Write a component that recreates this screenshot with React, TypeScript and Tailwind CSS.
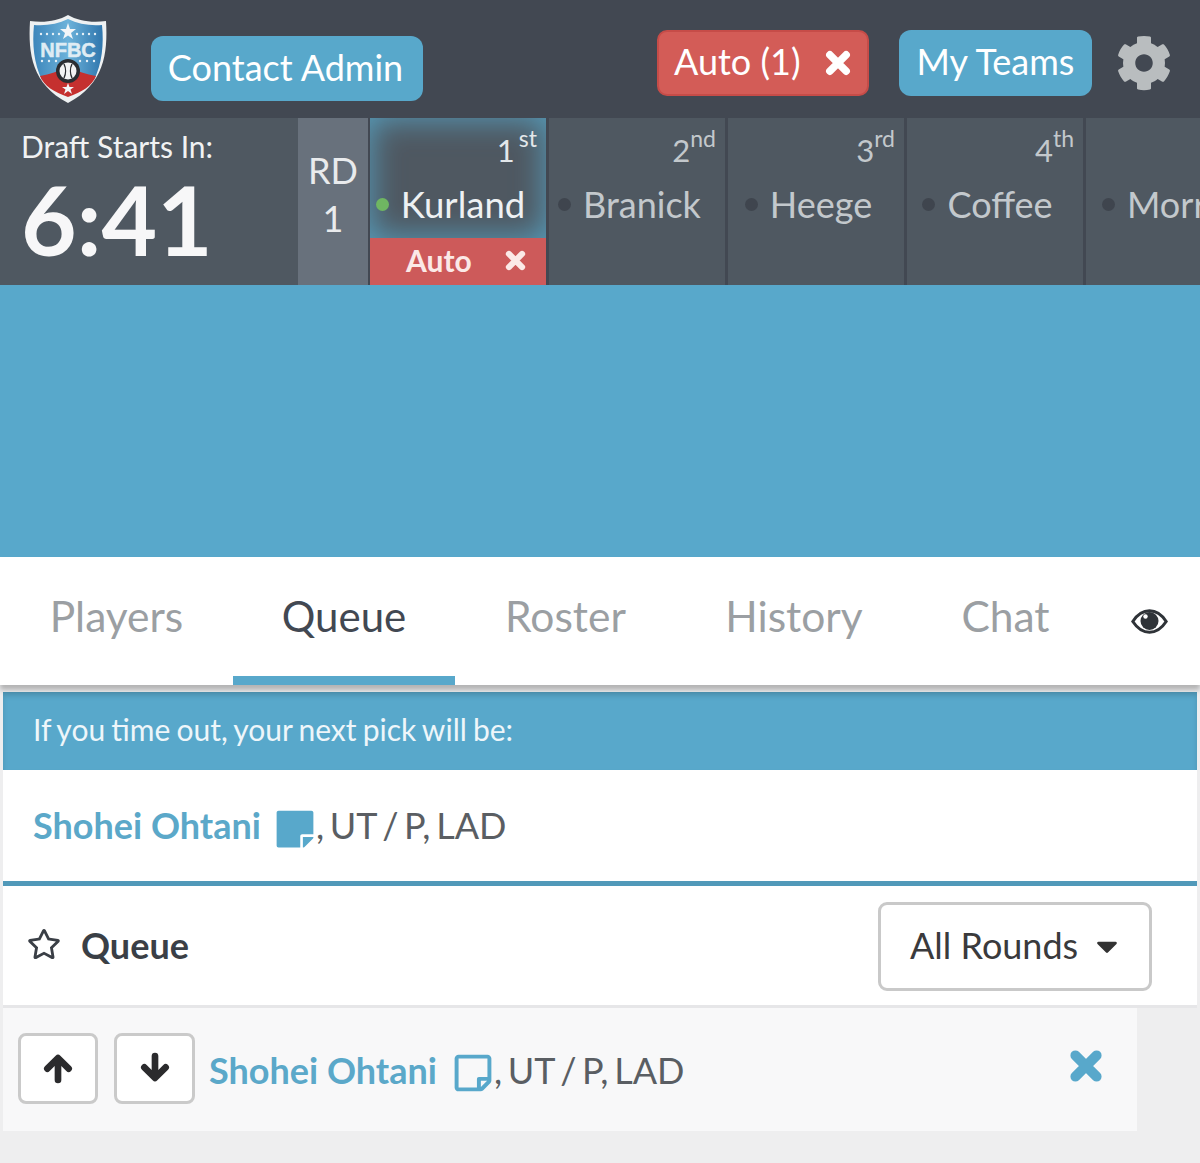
import { FaCaretDown, FaCog, FaRegStar, FaRegStickyNote, FaStickyNote } from "react-icons/fa";

const picks = [
  { num: "2", suffix: "nd", name: "Branick" },
  { num: "3", suffix: "rd", name: "Heege" },
  { num: "4", suffix: "th", name: "Coffee" },
];

const tabs = [
  { label: "Players", width: "w-[233px]" },
  { label: "Queue", width: "w-[222px]", active: true },
  { label: "Roster", width: "w-[221px]" },
  { label: "History", width: "w-[236px]" },
  { label: "Chat", width: "w-[187px]" },
];

const dotsTop = [13, 19, 25, 31, 49, 55, 61, 67];
const dotsLow = [14, 21, 28, 52, 59, 66];

function CloseIcon({ className }: { className: string }) {
  return (
    <svg viewBox="0 0 24 24" className={className} fill="none" stroke="currentColor" strokeWidth="7" strokeLinecap="round">
      <path d="M4.5 4.5 L19.5 19.5 M19.5 4.5 L4.5 19.5" />
    </svg>
  );
}

function ArrowIcon({ up }: { up?: boolean }) {
  return (
    <svg viewBox="0 0 24 24" className="w-[32px] h-[32px] text-[#2b2b2d]" fill="none" stroke="currentColor" strokeWidth="5" strokeLinecap="round" strokeLinejoin="round">
      <path d={up ? "M12 21 L12 5 M4 12.5 L12 4.5 L20 12.5" : "M12 3 L12 19 M4 11.5 L12 19.5 L20 11.5"} />
    </svg>
  );
}

function EyeIcon() {
  return (
    <svg width="37" height="25" viewBox="0 0 37 25" className="shrink-0">
      <path d="M1.8 12.5 C7 4.5 12.5 1.8 18.5 1.8 C24.5 1.8 30 4.5 35.2 12.5 C30 20.5 24.5 23.2 18.5 23.2 C12.5 23.2 7 20.5 1.8 12.5 Z" fill="none" stroke="#2f3338" strokeWidth="3" />
      <circle cx="18.5" cy="12" r="9" fill="#2f3338" />
      <circle cx="14.5" cy="7.5" r="2.2" fill="#ffffff" />
    </svg>
  );
}

function Logo() {
  return (
    <svg width="80" height="90" viewBox="0 0 80 90" className="shrink-0">
      <defs>
        <linearGradient id="shield" x1="0" y1="0" x2="1" y2="0">
          <stop offset="0" stopColor="#3d86bb" />
          <stop offset="0.5" stopColor="#6cb2da" />
          <stop offset="1" stopColor="#2f76ad" />
        </linearGradient>
      </defs>
      <path d="M40 1 C50 7 64 9 78 7 C80 40 76 70 40 89 C4 70 0 40 2 7 C16 9 30 7 40 1 Z" fill="#eef1f2" />
      <path d="M40 5 C50 10 62 12 74 11 C76 30 74 50 66 66 L14 66 C6 50 4 30 6 11 C18 12 30 10 40 5 Z" fill="url(#shield)" />
      <path d="M12 62 C22 60 30 58 40 52 C50 58 58 60 68 62 C64 72 54 78 40 83 C26 78 16 72 12 62 Z" fill="#c5302f" />
      <polygon points="40,9 42,15 48,15 43,19 45,25 40,21.5 35,25 37,19 32,15 38,15" fill="#f3f6f8" />
      {dotsTop.map((x) => (
        <circle key={x} cx={x} cy="20" r="1.2" fill="#e8f1f7" />
      ))}
      {dotsLow.map((x) => (
        <circle key={x} cx={x} cy="47" r="1.2" fill="#e8f1f7" />
      ))}
      <text x="40" y="43" textAnchor="middle" fontFamily="Liberation Sans, sans-serif" fontWeight="700" fontSize="20" fill="#dfecf4" stroke="#dfecf4" strokeWidth="0.5">
        NFBC
      </text>
      <circle cx="40" cy="57" r="12" fill="#2b2d31" />
      <circle cx="40" cy="57" r="8.5" fill="#f3f3f3" />
      <path d="M36 50 C38 54 38 60 36 64 M44 50 C42 54 42 60 44 64" stroke="#2b2d31" strokeWidth="1.4" fill="none" />
      <polygon points="40,69 41.5,73 46,73 42.5,75.5 44,80 40,77 36,80 37.5,75.5 34,73 38.5,73" fill="#f3f6f8" />
    </svg>
  );
}

function PickCell({ num, suffix, name }: { num?: string; suffix?: string; name: string }) {
  return (
    <div className="w-[176px] shrink-0 bg-[#4f5861] pr-[9px]">
      <div className="h-[31px] mt-[9px] text-right text-[31px] leading-[31px] text-[#c3c8cc]">
        {num}
        <sup className="text-[23px] leading-none align-[15px] top-0">{suffix}</sup>
      </div>
      <div className={`flex items-center gap-[12px] mt-[24px] text-[36px] leading-[44px] text-[#c3c8cc] whitespace-nowrap ${num ? "justify-center pr-[6px]" : "pl-[16px]"}`}>
        <span className="w-[13px] h-[13px] rounded-full bg-[#3f454e] shrink-0" />
        {name}
      </div>
    </div>
  );
}

export default function App() {
  return (
    <div className="w-[1200px] h-[1163px] overflow-hidden bg-[#eeeeef] font-['Lato',sans-serif] flex flex-col">
      <header className="h-[118px] shrink-0 bg-[#424852] flex items-center pl-[28px] pr-[28px]">
        <Logo />
        <button className="ml-[43px] mt-[18px] h-[65px] w-[272px] pb-[2px] pr-[3px] rounded-[12px] bg-[#58a8cb] text-white text-[36px] leading-none">
          Contact Admin
        </button>
        <button className="ml-auto mt-[8px] h-[66px] w-[212px] rounded-[10px] bg-[#d35c57] border-2 border-[#c64c48] text-white text-[36px] leading-none flex items-center pl-[15px]">
          <span className="mb-[4px]">Auto (1)</span>
          <CloseIcon className="ml-[24px] w-[26px] h-[26px]" />
        </button>
        <button className="ml-[30px] mt-[8px] h-[66px] w-[193px] pb-[4px] rounded-[12px] bg-[#58a8cb] text-white text-[36px] leading-none">
          My Teams
        </button>
        <FaCog className="ml-[24px] mt-[8px] text-[56px] text-[#b9bdbf]" />
      </header>

      <section className="h-[167px] shrink-0 bg-[#424852] flex gap-[3px] overflow-hidden">
        <div className="w-[298px] shrink-0 bg-[#4f5861] pl-[21px] text-white -mr-[3px]">
          <div className="text-[30px] leading-[31px] pt-[13px] box-content text-[#f1f2f3]">Draft Starts In:</div>
          <div className="text-[96px] leading-[80px] font-bold mt-[17px] text-[#f7f7f8]">6:41</div>
        </div>
        <div className="w-[70px] shrink-0 bg-[#68717c] text-center text-[#e9ebed] text-[36px] leading-[48px] pt-[28px] -mr-px">
          RD
          <br />1
        </div>
        <div className="w-[176px] shrink-0 flex flex-col bg-[#4f5861]">
          <div className="flex-1 pr-[9px] shadow-[inset_0_0_32px_rgba(88,168,203,0.9)]">
            <div className="h-[31px] pt-0 mt-[9px] text-right text-[31px] leading-[31px] text-[#e3e7ea]">
              1
              <sup className="ml-[4px] text-[23px] leading-none align-[15px] top-0">st</sup>
            </div>
            <div className="flex items-center justify-center pr-[6px] gap-[12px] mt-[24px] text-[36.5px] leading-[44px] text-[#eef1f3] whitespace-nowrap">
              <span className="w-[13px] h-[13px] rounded-full bg-[#6fb662] shrink-0" />
              Kurland
            </div>
          </div>
          <div className="h-[47px] bg-[#cd5a5a] flex items-center pl-[36px] pb-[2px] text-[#fbe9e7] text-[30px] font-bold leading-none">
            <span className="mb-[2px]">Auto</span>
            <CloseIcon className="ml-[33px] w-[21px] h-[21px]" />
          </div>
        </div>
        {picks.map((p) => (
          <PickCell key={p.name} {...p} />
        ))}
        <PickCell name="Morr" />
      </section>

      <div className="h-[272px] shrink-0 bg-[#58a8cb]" />

      <nav className="h-[128px] shrink-0 bg-white flex items-stretch shadow-[0_5px_5px_rgba(0,0,0,0.25)] z-10">
        {tabs.map((t) => (
          <div
            key={t.label}
            className={
              t.active
                ? "flex items-center justify-center text-[42px] text-[#424852] border-b-[9px] border-[#58a8cb] " + t.width
                : "flex items-center justify-center text-[42.5px] text-[#9b9fa3] border-b-[9px] border-transparent pb-[2px] " + t.width
            }
          >
            {t.label}
          </div>
        ))}
        <div className="flex items-center pl-[32px]">
          <EyeIcon />
        </div>
      </nav>

      <main className="flex-1 mx-[3px] mt-[7px] flex flex-col">
        <div className="h-[78px] shrink-0 bg-[#58a8cb] flex items-center pl-[30px] pb-[3px] text-[30px] [word-spacing:-1.5px] text-[#eef6fa] shadow-[inset_0_4px_5px_rgba(0,0,0,0.12)]">
          If you time out, your next pick will be:
        </div>
        <div className="h-[116px] shrink-0 bg-white border-b-[5px] border-[#5199b9] flex items-center pl-[30px] pb-[1px] text-[36px] text-[#5a5e63] whitespace-nowrap">
          <span className="font-bold text-[#5ba8c9]">Shohei Ohtani</span>
          <FaStickyNote className="ml-[13px] text-[42px] text-[#58a8cb] mt-[8px]" />
          <span className="[word-spacing:-3.5px]">, UT / P, LAD</span>
        </div>
        <div className="h-[122px] shrink-0 bg-white border-b-[3px] border-[#e6e6e8] flex items-center pl-[24px] pr-[45px]">
          <FaRegStar className="text-[34px] text-[#3a3f46] mb-[4px]" />
          <span className="ml-[20px] text-[36px] font-bold text-[#3a3f46] mb-[2px]">Queue</span>
          <button className="ml-auto w-[274px] h-[89px] bg-white rounded-[9px] border-[3px] border-[#c9c9c9] text-[36px] text-[#3a3a3c] flex items-center pl-[29px] mt-[1px]">
            <span className="mb-[2px]">All Rounds</span>
            <FaCaretDown className="ml-[12px] text-[34px] text-[#333]" />
          </button>
        </div>
        <div className="w-[1134px] h-[123px] shrink-0 bg-[#f8f8f9] flex items-center pl-[15px] pr-[34px]">
          <button className="w-[80px] h-[71px] mb-[3px] bg-white rounded-[8px] border-[3px] border-[#cacaca] flex items-center justify-center">
            <ArrowIcon up />
          </button>
          <button className="ml-[16px] w-[81px] h-[71px] mb-[3px] bg-white rounded-[8px] border-[3px] border-[#cacaca] flex items-center justify-center">
            <ArrowIcon />
          </button>
          <div className="ml-[14px] flex items-center text-[36px] text-[#5a5e63] whitespace-nowrap">
            <span className="font-bold text-[#5ba8c9]">Shohei Ohtani</span>
            <FaRegStickyNote className="ml-[15px] text-[42px] text-[#58a8cb] mt-[6px]" />
            <span className="[word-spacing:-3.5px]">, UT / P, LAD</span>
          </div>
          <CloseIcon className="ml-auto w-[34px] h-[34px] text-[#58a8cb] mb-[7px]" />
        </div>
      </main>
    </div>
  );
}
